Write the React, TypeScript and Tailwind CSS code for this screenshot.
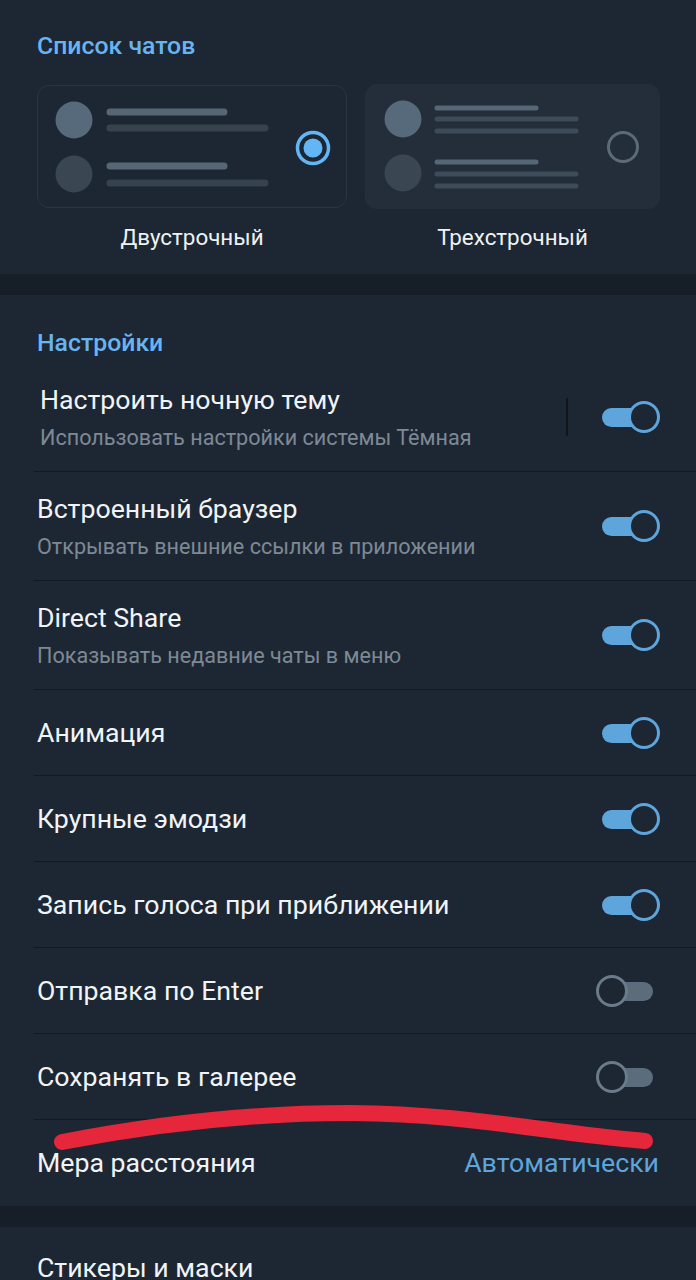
import React from "react";

const Toggle = ({ on }: { on: boolean }) => {
  if (on) {
    return (
      <div className="relative w-[60px] h-[34px]">
        <div className="absolute left-[2px] top-[8px] w-[46px] h-[19px] rounded-full bg-[#5ea5dc]" />
        <div className="absolute right-0 top-[1px] w-[32px] h-[32px] rounded-full border-[3px] border-[#5ea5dc] bg-[#1d2733]" />
      </div>
    );
  }
  return (
    <div className="relative w-[60px] h-[34px] mr-[4px]">
      <div className="absolute right-[3px] top-[8px] w-[46px] h-[19px] rounded-full bg-[#5b6d7c]" />
      <div className="absolute left-0 top-[1px] w-[32px] h-[32px] rounded-full border-[3px] border-[#6a7b89] bg-[#1d2733]" />
    </div>
  );
};

const TwoLinePreview = () => (
  <svg width="310" height="123" viewBox="0 0 310 123">
    <circle cx="36" cy="34" r="18.5" fill="#566a7b" />
    <line x1="72" y1="26" x2="186" y2="26" stroke="#566674" strokeWidth="7" strokeLinecap="round" />
    <line x1="72" y1="42" x2="227" y2="42" stroke="#36434f" strokeWidth="7" strokeLinecap="round" />
    <circle cx="36" cy="88" r="18.5" fill="#3a4753" />
    <line x1="72" y1="80" x2="186" y2="80" stroke="#566674" strokeWidth="7" strokeLinecap="round" />
    <line x1="72" y1="97" x2="227" y2="97" stroke="#36434f" strokeWidth="7" strokeLinecap="round" />
    <circle cx="275" cy="62" r="15.5" fill="none" stroke="#64b5f5" strokeWidth="3.5" />
    <circle cx="275" cy="62" r="9.5" fill="#64b5f5" />
  </svg>
);

const ThreeLinePreview = () => (
  <svg width="295" height="125" viewBox="0 0 295 125">
    <circle cx="38" cy="35" r="18.5" fill="#566a7b" />
    <line x1="72" y1="24" x2="171" y2="24" stroke="#566674" strokeWidth="5" strokeLinecap="round" />
    <line x1="72" y1="35" x2="211" y2="35" stroke="#3e4b58" strokeWidth="5" strokeLinecap="round" />
    <line x1="72" y1="47" x2="211" y2="47" stroke="#3e4b58" strokeWidth="5" strokeLinecap="round" />
    <circle cx="38" cy="89" r="18.5" fill="#3a4753" />
    <line x1="72" y1="78" x2="171" y2="78" stroke="#566674" strokeWidth="5" strokeLinecap="round" />
    <line x1="72" y1="90" x2="211" y2="90" stroke="#3e4b58" strokeWidth="5" strokeLinecap="round" />
    <line x1="72" y1="102" x2="211" y2="102" stroke="#3e4b58" strokeWidth="5" strokeLinecap="round" />
    <circle cx="258" cy="63" r="14.5" fill="none" stroke="#5d6b77" strokeWidth="3" />
  </svg>
);

const SubRow = ({ title, sub, first }: { title: string; sub: string; first?: boolean }) => (
  <div className="h-[109px] ml-[34px] border-b border-[#121920] flex items-center pr-[36px]">
    <div className={first ? "flex-1 pl-[6px] pt-[2px]" : "flex-1 pl-[3px] pt-[2px]"}>
      <div className="text-[26.7px] leading-[30px] text-[#f1f4f7]">{title}</div>
      <div className="text-[21.6px] leading-[26px] mt-[10px] text-[#7d8995]">{sub}</div>
    </div>
    {first && <div className="w-[2px] h-[38px] bg-[#10161c] mr-[32px]" />}
    <Toggle on />
  </div>
);

const Row = ({ title, on }: { title: string; on: boolean }) => (
  <div className="h-[86px] ml-[34px] border-b border-[#121920] flex items-center pr-[36px] pl-[3px]">
    <div className="flex-1 text-[26.7px] leading-[30px] text-[#f1f4f7]">{title}</div>
    <Toggle on={on} />
  </div>
);

export default function App() {
  return (
    <div className="relative min-h-screen bg-[#161e27] font-['Roboto',sans-serif] overflow-hidden">
      <section className="bg-[#1d2733] h-[274px] px-[37px] pt-[32px]">
        <div className="text-[24.8px] leading-[28px] font-medium text-[#68b4f2]">Список чатов</div>
        <div className="flex gap-[18px] mt-[25px]">
          <div className="flex flex-col items-center w-[310px]">
            <div className="w-[310px] h-[123px] rounded-[12px] border border-[#2a3540] overflow-hidden">
              <TwoLinePreview />
            </div>
            <div className="mt-[16px] text-[22.4px] leading-[26px] text-[#eef2f5]">Двустрочный</div>
          </div>
          <div className="flex flex-col items-center w-[295px]">
            <div className="w-[295px] h-[125px] -mt-[1px] rounded-[12px] bg-[#232e3a] overflow-hidden">
              <ThreeLinePreview />
            </div>
            <div className="mt-[15px] text-[22.4px] leading-[26px] text-[#eef2f5]">Трехстрочный</div>
          </div>
        </div>
      </section>

      <div className="h-[21px]" />

      <section className="bg-[#1d2733]">
        <div className="h-[68px] px-[37px] pt-[34px]">
          <div className="text-[24.8px] leading-[28px] font-medium text-[#68b4f2]">Настройки</div>
        </div>
        <SubRow first title="Настроить ночную тему" sub="Использовать настройки системы Тёмная" />
        <SubRow title="Встроенный браузер" sub="Открывать внешние ссылки в приложении" />
        <SubRow title="Direct Share" sub="Показывать недавние чаты в меню" />
        <Row title="Анимация" on />
        <Row title="Крупные эмодзи" on />
        <Row title="Запись голоса при приближении" on />
        <Row title="Отправка по Enter" on={false} />
        <Row title="Сохранять в галерее" on={false} />
        <div className="h-[86px] ml-[34px] flex items-center justify-between pr-[37px] pl-[3px]">
          <div className="text-[26.7px] leading-[30px] text-[#f1f4f7]">Мера расстояния</div>
          <div className="text-[26.7px] leading-[30px] text-[#5ea5dc]">Автоматически</div>
        </div>
      </section>

      <div className="h-[21px]" />

      <section className="bg-[#1d2733] h-[80px] px-[37px] pt-[26px]">
        <div className="text-[26.7px] leading-[30px] text-[#f1f4f7]">Стикеры и маски</div>
      </section>

      <svg className="absolute left-0 top-0 pointer-events-none" width="696" height="1280" viewBox="0 0 696 1280">
        <path
          d="M 62 1142 C 140 1127, 240 1113, 350 1113 C 470 1114, 540 1132, 645 1141"
          fill="none"
          stroke="#e6263a"
          strokeWidth="16"
          strokeLinecap="round"
        />
      </svg>
    </div>
  );
}
